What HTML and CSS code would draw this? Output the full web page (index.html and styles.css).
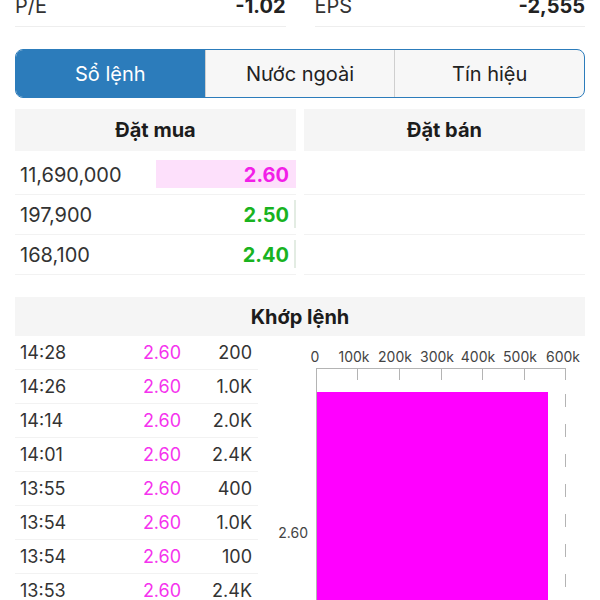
FILE: index.html
```html
<!DOCTYPE html>
<html lang="vi">
  <head>
    <meta charset="UTF-8" />
    <meta name="viewport" content="width=device-width, initial-scale=1.0" />
    <title>Sổ lệnh</title>
    <link rel="stylesheet" href="styles.css">
  </head>
  <body>
    <div class="screen">
      <div class="stats">
        <div class="stat">
          <span class="stat-label">P/E</span>
          <span class="stat-value">-1.02</span>
        </div>
        <div class="stat">
          <span class="stat-label">EPS</span>
          <span class="stat-value">-2,555</span>
        </div>
      </div>

      <div class="tabs">
        <div class="tab active">Sổ lệnh</div>
        <div class="tab">Nước ngoài</div>
        <div class="tab">Tín hiệu</div>
      </div>

      <div class="book">
        <div class="book-side">
          <div class="book-head">Đặt mua</div>
          <div class="book-row">
            <span class="vol-bar buy-top" style="width: 50%"></span>
            <span class="qty">11,690,000</span>
            <span class="price up-ref">2.60</span>
          </div>
          <div class="book-row">
            <span class="vol-bar" style="width: 0.85%"></span>
            <span class="qty">197,900</span>
            <span class="price up">2.50</span>
          </div>
          <div class="book-row">
            <span class="vol-bar" style="width: 0.72%"></span>
            <span class="qty">168,100</span>
            <span class="price up">2.40</span>
          </div>
        </div>
        <div class="book-side">
          <div class="book-head">Đặt bán</div>
          <div class="book-row"></div>
          <div class="book-row"></div>
          <div class="book-row"></div>
        </div>
      </div>

      <div class="match-head">Khớp lệnh</div>
      <div class="match">
        <div class="trades">
          <div class="trade"><span>14:28</span><span class="t-price">2.60</span><span class="t-vol">200</span></div>
          <div class="trade"><span>14:26</span><span class="t-price">2.60</span><span class="t-vol">1.0K</span></div>
          <div class="trade"><span>14:14</span><span class="t-price">2.60</span><span class="t-vol">2.0K</span></div>
          <div class="trade"><span>14:01</span><span class="t-price">2.60</span><span class="t-vol">2.4K</span></div>
          <div class="trade"><span>13:55</span><span class="t-price">2.60</span><span class="t-vol">400</span></div>
          <div class="trade"><span>13:54</span><span class="t-price">2.60</span><span class="t-vol">1.0K</span></div>
          <div class="trade"><span>13:54</span><span class="t-price">2.60</span><span class="t-vol">100</span></div>
          <div class="trade"><span>13:53</span><span class="t-price">2.60</span><span class="t-vol">2.4K</span></div>
        </div>
        <svg class="chart" width="327" height="265" viewBox="0 0 327 265">
          <g class="axis-text" text-anchor="middle">
            <text x="57" y="26">0</text>
            <text x="96" y="26">100k</text>
            <text x="137" y="26">200k</text>
            <text x="179" y="26">300k</text>
            <text x="220" y="26">400k</text>
            <text x="262" y="26">500k</text>
            <text x="305" y="26">600k</text>
          </g>
          <g stroke="#b4b4b4" stroke-width="1">
            <line x1="58" y1="32.5" x2="308" y2="32.5" />
            <line x1="58.5" y1="32" x2="58.5" y2="265" />
            <line x1="99.5" y1="32" x2="99.5" y2="44" />
            <line x1="141.5" y1="32" x2="141.5" y2="44" />
            <line x1="183.5" y1="32" x2="183.5" y2="44" />
            <line x1="224.5" y1="32" x2="224.5" y2="44" />
            <line x1="266.5" y1="32" x2="266.5" y2="44" />
            <line x1="307.5" y1="32" x2="307.5" y2="44" />
            <line x1="307.5" y1="58" x2="307.5" y2="265" stroke-dasharray="13 17" />
          </g>
          <rect x="59" y="56" width="231" height="290" fill="#ff00ff" />
          <text class="axis-text" x="50" y="202" text-anchor="end">2.60</text>
        </svg>
      </div>
    </div>
  </body>
</html>
```

FILE: styles.css
```css
* {
  margin: 0;
  padding: 0;
  box-sizing: border-box;
  font-family: Inter, "Noto Sans", sans-serif;
}
body {
  background: #fff;
  color: #2b2b2b;
  overflow: hidden;
}
.screen {
  padding: 0 15px;
}
.stats {
  display: flex;
  gap: 29px;
  margin-top: -6px;
}
.stat {
  flex: 1;
  display: flex;
  justify-content: space-between;
  font-size: 20px;
  line-height: 25px;
  padding-bottom: 7px;
  border-bottom: 1px solid #eeeeee;
}
.stat-label {
  color: #333;
}
.stat-value {
  font-weight: 700;
  color: #222;
}
.tabs {
  display: flex;
  margin-top: 22px;
  height: 49px;
  border: 1.5px solid #2c7cbb;
  border-radius: 8px;
  overflow: hidden;
  background: #f7f7f7;
}
.tab {
  flex: 1;
  display: flex;
  align-items: center;
  justify-content: center;
  font-size: 20px;
  color: #222;
  border-left: 1px solid #cfcfcf;
}
.tab:first-child {
  border-left: none;
}
.tab.active {
  background: #2c7cbb;
  color: #fff;
}
.book {
  display: flex;
  gap: 8px;
  margin-top: 11px;
}
.book-side {
  flex: 1;
}
.book-head {
  height: 42px;
  display: flex;
  align-items: center;
  justify-content: center;
  background: #f5f5f5;
  font-size: 20px;
  font-weight: 700;
  color: #1c1c1c;
  margin-bottom: 4px;
}
.book-row {
  position: relative;
  height: 40px;
  display: flex;
  align-items: center;
  justify-content: space-between;
  padding: 0 7px 0 5px;
  border-bottom: 1.5px solid #f2f2f2;
  font-size: 20px;
}
.vol-bar {
  position: absolute;
  right: 0;
  top: 5px;
  bottom: 6px;
  background: #e3ece3;
}
.vol-bar.buy-top {
  background: #fde0fb;
}
.qty,
.price {
  position: relative;
}
.qty {
  color: #333;
}
.price {
  font-weight: 700;
}
.price.up {
  color: #19b31f;
}
.price.up-ref {
  color: #f21ee8;
}
.match-head {
  margin-top: 22px;
  height: 39px;
  display: flex;
  align-items: center;
  justify-content: center;
  background: #f5f5f5;
  font-size: 20px;
  font-weight: 700;
  color: #1c1c1c;
}
.match {
  display: flex;
}
.trades {
  width: 243px;
}
.trade {
  display: grid;
  grid-template-columns: 100px 84px 1fr;
  align-items: center;
  height: 34px;
  padding-left: 5px;
  font-size: 18px;
  color: #333;
  border-bottom: 1px solid #f2f2f2;
}
.t-price {
  text-align: center;
  color: #f533ee;
}
.t-vol {
  text-align: right;
  padding-right: 6px;
}
.chart {
  display: block;
  flex: none;
}
.axis-text {
  font-family: Inter, "Noto Sans", sans-serif;
  font-size: 14px;
  fill: #444;
}
```
